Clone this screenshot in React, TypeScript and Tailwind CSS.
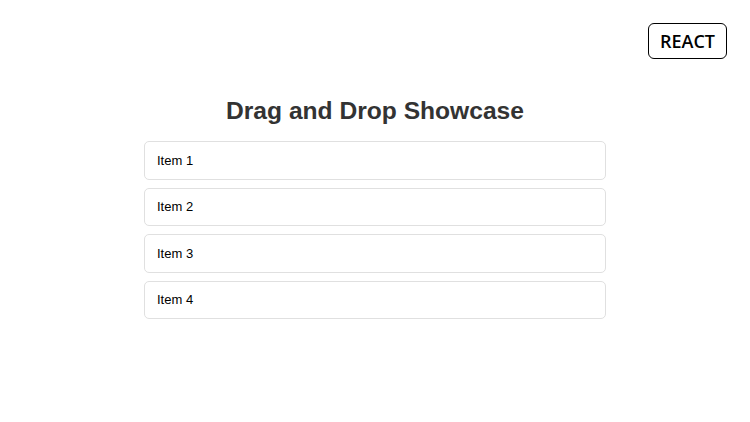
export default function App() {
  const items = ["Item 1", "Item 2", "Item 3", "Item 4"];

  return (
    <div className="relative min-h-[422px] bg-white font-['Liberation_Sans',Arial,sans-serif]">
      {/* badge */}
      <div className="absolute right-[23px] top-[23px] flex h-[36px] w-[79px] items-center justify-center rounded-[6px] border border-black font-['Open_Sans',sans-serif] text-[18px] font-semibold text-black">
        REACT
      </div>

      <div className="pt-[96px]">
        <h1 className="text-center text-[24.6px] font-bold leading-[30px] text-[#333]">
          Drag and Drop Showcase
        </h1>

        <div className="mx-auto mt-[15px] flex w-[462px] flex-col gap-[8px]">
          {items.map((item) => (
            <div
              key={item}
              className="flex h-[38.5px] items-center rounded-[5px] border border-[#e0e0e0] bg-white px-[12px] text-[13px] text-black"
            >
              {item}
            </div>
          ))}
        </div>
      </div>
    </div>
  );
}
